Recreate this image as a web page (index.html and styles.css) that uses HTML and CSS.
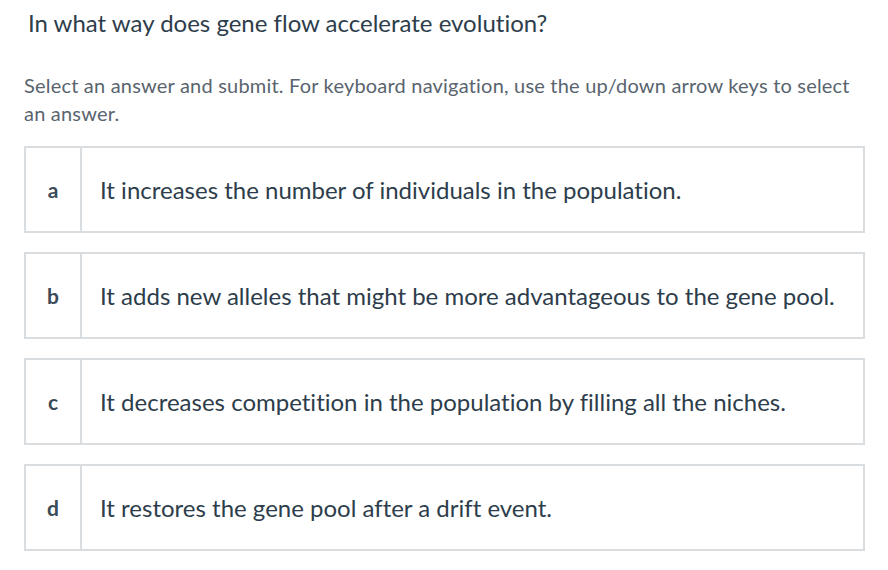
FILE: index.html
```html
<!DOCTYPE html>
<html>
<head>
<meta charset="utf-8">
<link rel="stylesheet" href="styles.css">
</head>
<body>
<div class="page">
  <h1 class="question">In what way does gene flow accelerate evolution?</h1>
  <p class="instructions">Select an answer and submit. For keyboard navigation, use the up/down arrow keys to select an answer.</p>
  <div class="options">
    <div class="option"><div class="letter">a</div><div class="text">It increases the number of individuals in the population.</div></div>
    <div class="option"><div class="letter">b</div><div class="text">It adds new alleles that might be more advantageous to the gene pool.</div></div>
    <div class="option"><div class="letter">c</div><div class="text">It decreases competition in the population by filling all the niches.</div></div>
    <div class="option"><div class="letter">d</div><div class="text">It restores the gene pool after a drift event.</div></div>
  </div>
</div>
</body>
</html>
```
FILE: styles.css
```css
html, body { margin: 0; padding: 0; background: #fff; }
body {
  font-family: "Lato", "Open Sans", sans-serif;
  color: #2f3f4d;
  font-variant-ligatures: none;
}
.page { padding: 0 23px 0 24px; }
.question {
  margin: 0;
  padding: 7px 0 0 4px;
  font-size: 24px;
  font-weight: 400;
  line-height: 32px;
  color: #2d3d4b;
}
.instructions {
  margin: 32px 0 0 0;
  font-size: 20px;
  line-height: 28px;
  letter-spacing: 0.2px;
  color: #59646e;
  width: 841px;
}
.options { display: flex; flex-direction: column; gap: 19px; margin-top: 19px; }
.option {
  display: flex;
  height: 83px;
  border: 2px solid #d9dde0;
  width: 837px;
}
.letter {
  width: 54px;
  border-right: 2px solid #d9dde0;
  display: flex; align-items: center; justify-content: center;
  font-size: 21px; font-weight: 700; color: #3a4a58;
}
.text {
  display: flex; align-items: center;
  padding-left: 18px;
  font-size: 24px; color: #2d3d4b;
}
```
